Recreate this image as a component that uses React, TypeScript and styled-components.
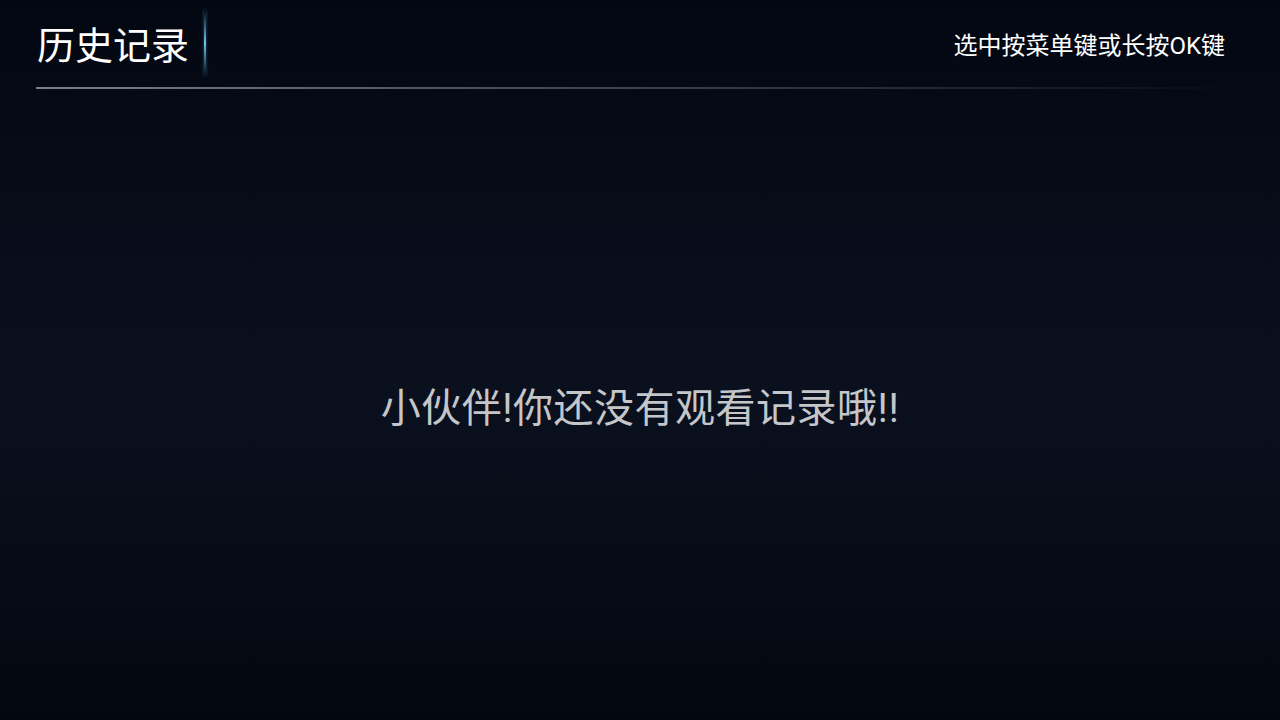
import styled, { createGlobalStyle } from 'styled-components';

const GlobalStyle = createGlobalStyle`
	html, body {
		margin: 0;
		padding: 0;
		background: #040812;
	}
	body {
		font-family: Roboto, "Noto Sans CJK SC", "Noto Sans", sans-serif;
	}
`;

const Page = styled.div`
	width: 1280px;
	height: 720px;
	display: flex;
	flex-direction: column;
	background: linear-gradient(180deg, #030711 0%, #070d1a 35%, #0a101e 55%, #060b16 80%, #03070f 100%);
	overflow: hidden;
`;

const Header = styled.header`
	position: relative;
	display: flex;
	align-items: center;
	height: 89px;
	margin: 0 36px;
	padding: 0 19px 0 1px;
	&::after {
		content: "";
		position: absolute;
		left: 0;
		right: 0;
		bottom: 0;
		height: 2px;
		background: linear-gradient(90deg, rgba(140,148,165,0.85) 0%, rgba(110,118,135,0.6) 40%, rgba(70,78,95,0.35) 80%, rgba(40,46,60,0) 100%);
	}
`;

const Title = styled.h1`
	margin: 0;
	font-size: 38px;
	font-weight: 400;
	color: #ffffff;
	line-height: 1;
	padding-top: 3px;
`;

const Glow = styled.span`
	width: 2px;
	height: 66px;
	margin-left: 15px;
	margin-top: -4px;
	background: linear-gradient(180deg, rgba(80,170,220,0) 0%, #6cc4ec 50%, rgba(80,170,220,0) 100%);
	box-shadow: 0 0 3px rgba(90,180,230,0.5);
`;

const Hint = styled.div`
	margin-left: auto;
	font-size: 24px;
	color: #ffffff;
	line-height: 1;
	padding-top: 2px;
`;

const Main = styled.main`
	flex: 1;
	display: flex;
	align-items: center;
	justify-content: center;
	padding-top: 8px;
`;

const Empty = styled.p`
	margin: 0;
	font-size: 40px;
	letter-spacing: 0.5px;
	color: #c4c6ca;
	line-height: 1;
`;

function App()
{
	return (
		<Page>
			<GlobalStyle />
			<Header>
				<Title>历史记录</Title>
				<Glow />
				<Hint>选中按菜单键或长按OK键</Hint>
			</Header>
			<Main>
				<Empty>小伙伴!你还没有观看记录哦!!</Empty>
			</Main>
		</Page>);
}

export default App;
